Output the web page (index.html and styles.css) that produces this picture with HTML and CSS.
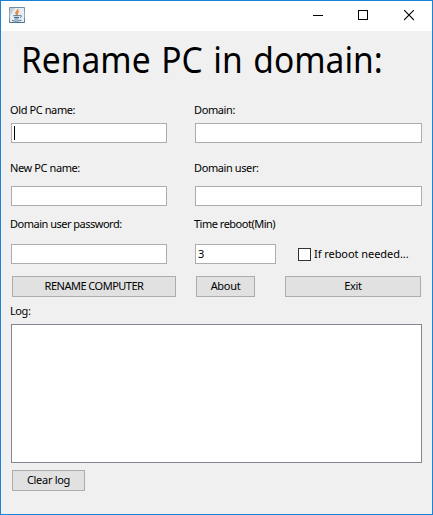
FILE: index.html
```
<!DOCTYPE html>
<html lang="en">
<head>
<meta charset="utf-8">
<title>Rename PC in domain</title>
<link rel="stylesheet" href="styles.css">
</head>
<body>
<div class="window">
  <header class="titlebar">
    <svg class="app-icon" width="16" height="16" viewBox="0 0 16 16">
      <defs><linearGradient id="g" x1="0" y1="0" x2="0" y2="1"><stop offset="0" stop-color="#6d8ba3"/><stop offset=".5" stop-color="#9fb1c0"/><stop offset="1" stop-color="#46708f"/></linearGradient></defs>
      <rect width="16" height="16" rx="1" fill="url(#g)"/>
      <rect x="1" y="1" width="14" height="14" fill="#e9eef2"/>
      <path d="M1 1h5L1 9z" fill="#c3d0da"/>
      <path d="M8.800 2c.8 2-3.200 2.500-1.800 4.700l.8 1.300M10 4.300c-2 .8-2.300 1.700-1.200 3.200" fill="none" stroke="#e5883c" stroke-width="1.300"/>
      <path d="M4.300 8.700h6.200M5 10.500h5M5.500 12h4M10.500 8.500c2.500-.8 2.500 1.500.3 2.200M3 13.400c2 1 7 1 9.500-.2" fill="none" stroke="#477492" stroke-width="1"/>
    </svg>
    <div class="controls">
      <svg width="10" height="11" viewBox="0 0 10 11" shape-rendering="crispEdges"><path d="M0 5.500h10" stroke="#000"/></svg>
      <svg width="10" height="11" viewBox="0 0 10 11" shape-rendering="crispEdges"><path d="M.5 .5h9v9h-9z" fill="none" stroke="#000"/></svg>
      <svg class="close" width="10" height="11" viewBox="0 0 10 11"><path d="M0 0l10 10M10 0l-10 10" stroke="#000" stroke-width="1.100"/></svg>
    </div>
  </header>
  <main class="content">
    <h1 class="title">Rename PC in domain:</h1>
    <div class="row row-first">
      <div class="field"><span class="label">Old PC name:</span><div class="input"><i class="caret"></i></div></div>
      <div class="field"><span class="label">Domain:</span><div class="input"></div></div>
    </div>
    <div class="row row-second">
      <div class="field"><span class="label">New PC name:</span><div class="input"></div></div>
      <div class="field"><span class="label">Domain user:</span><div class="input"></div></div>
    </div>
    <div class="row row-third">
      <div class="field"><span class="label">Domain user password:</span><div class="input"></div></div>
      <div class="field"><span class="label">Time reboot(Min)</span>
        <div class="reboot"><div class="input minutes">3</div><span class="checkbox"></span><span class="check-text">If reboot needed...</span></div>
      </div>
    </div>
    <div class="buttons">
      <div class="button rename">RENAME COMPUTER</div>
      <div class="button about">About</div>
      <div class="button exit">Exit</div>
    </div>
    <span class="label log-label">Log:</span>
    <div class="log"></div>
    <div class="button clear">Clear log</div>
  </main>
</div>
</body>
</html>
```
FILE: styles.css
```
* { box-sizing: border-box; }
body { margin: 0; }
.window {
  width: 433px;
  height: 515px;
  border: 1px solid #1883d7;
  background: #f0f0f0;
  color: #000;
  font: 11px/14px "Noto Sans", sans-serif;
  white-space: nowrap;
  overflow: hidden;
}
.titlebar {
  height: 30px;
  padding: 6px 18px 0 8px;
  display: flex;
  justify-content: space-between;
  background: #fff;
}
.app-icon { display: block; }
.controls { display: flex; gap: 35px; padding-top: 3px; }
.controls svg { display: block; }
.controls .close { margin-left: 1px; }
.content { padding: 3px 10px 0; }
.title {
  margin: 0 0 0 10px;
  font-size: 36px;
  line-height: 50px;
  font-weight: 400;
  word-spacing: 2px;
  transform: scaleX(0.932);
  transform-origin: left;
  padding-top: 1px;
}
.row { display: grid; grid-template-columns: 156px 227px; column-gap: 28px; }
.row-first { margin-top: 18px; }
.row-second { margin-top: 18px; }
.row-third { margin-top: 11px; }
.label { display: block; letter-spacing: -0.4px; margin-left: -1px; }
.row-third .label { letter-spacing: -0.5px; }
.input { height: 20px; border: 1px solid #abadb3; background: #fff; }
.row-first .input { margin-top: 6px; }
.row-second .input { margin-top: 11px; }
.row-third .field > .input, .reboot { margin-top: 13px; }
.row-third .reboot .input { margin-top: 0; }
.caret { display: block; width: 1px; height: 14px; margin: 2px; background: #000; }
.reboot { display: flex; align-items: center; }
.minutes { width: 81px; padding: 2px; }
.checkbox { width: 13px; height: 13px; margin-left: 22px; border: 1px solid #333; background: #fff; }
.check-text { margin-left: 3px; letter-spacing: -0.05px; }
.buttons { display: flex; margin: 12px 0 0 1px; }
.button {
  height: 21px;
  border: 1px solid #adadad;
  background: #e1e1e1;
  text-align: center;
  line-height: 18px;
  letter-spacing: -0.3px;
}
.rename { width: 164px; letter-spacing: -0.5px; }
.about { width: 59px; margin-left: 20px; }
.exit { width: 136px; margin-left: 30px; }
.log-label { margin-top: 7px; }
.log { height: 139px; margin-top: 6px; border: 1px solid #828790; background: #fff; }
.clear { width: 73px; margin: 7px 0 0 1px; }
```
